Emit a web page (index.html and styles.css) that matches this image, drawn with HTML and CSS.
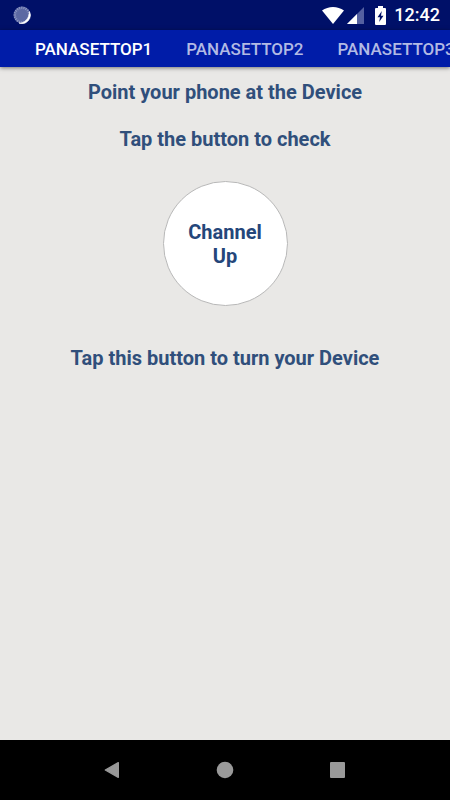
FILE: index.html
```
<!DOCTYPE html>
<html lang="en">
<head>
<meta charset="UTF-8">
<meta name="viewport" content="width=device-width, initial-scale=1">
<title>Remote setup</title>
<link rel="stylesheet" href="styles.css">
</head>
<body>
  <div class="status-bar">
    <svg class="loader" width="18" height="18" viewBox="0 0 18 18">
      <circle cx="9" cy="9" r="8.5" fill="#5c69a3"/>
      <circle cx="9" cy="9" r="7.2" fill="none" stroke="#8f98c4" stroke-width="2.4" stroke-dasharray="1 1.2"/>
      <path d="M16.4 5.5A8.4 8.4 0 0 1 6 17.1C12 17.3 16.3 12.5 16.4 5.5Z" fill="#fff" stroke="#fff" stroke-width="0.6"/>
    </svg>
    <div class="status-icons">
      <svg class="wifi" width="22" height="17" viewBox="0 0 22 17">
        <path d="M0 3.6C6.4 -1.2 15.6 -1.2 22 3.6L11 17Z" fill="#fff"/>
      </svg>
      <svg class="signal" width="17" height="17" viewBox="0 0 17 17">
        <path d="M17 0V17H0Z" fill="#5460a0"/>
        <path d="M10 7V17H0Z" fill="#fff"/>
      </svg>
      <svg class="battery" width="11" height="19" viewBox="0 0 11 19">
        <path d="M3 0H8V2H10Q11 2 11 3V18Q11 19 10 19H1Q0 19 0 18V3Q0 2 1 2H3Z" fill="#fff"/>
        <path d="M6.8 5L2.5 11.2H5L4.2 16L8.5 9.7H6Z" fill="#001068"/>
      </svg>
      <span class="clock">12:42</span>
    </div>
  </div>

  <nav class="tabs">
    <button class="tab active" type="button">PANASETTOP1</button>
    <button class="tab" type="button">PANASETTOP2</button>
    <button class="tab" type="button">PANASETTOP3</button>
  </nav>

  <main class="content">
    <p class="message">Point your phone at the Device</p>
    <p class="message">Tap the button to check</p>
    <button class="round-button" type="button">Channel Up</button>
    <p class="message">Tap this button to turn your Device</p>
  </main>

  <div class="nav-bar">
    <button class="nav-button" type="button" aria-label="Back">
      <svg width="18" height="18" viewBox="0 0 18 18"><path d="M14.3 1.7V16.3L1.3 9Z" fill="#999" stroke="#999" stroke-width="1.4" stroke-linejoin="round"/></svg>
    </button>
    <button class="nav-button" type="button" aria-label="Home">
      <svg width="18" height="18" viewBox="0 0 18 18"><circle cx="9" cy="9" r="8.3" fill="#999"/></svg>
    </button>
    <button class="nav-button" type="button" aria-label="Recent apps">
      <svg width="18" height="18" viewBox="0 0 18 18"><rect x="1" y="1" width="15" height="16" rx="1" fill="#999"/></svg>
    </button>
  </div>
</body>
</html>
```
FILE: styles.css
```
* {
  box-sizing: border-box;
}
body {
  margin: 0;
  min-height: 100vh;
  display: flex;
  flex-direction: column;
  overflow-x: hidden;
  background-color: #e9e8e6;
  font-family: Roboto, "Liberation Sans", sans-serif;
}
button {
  font-family: inherit;
  border: none;
  cursor: pointer;
}
svg {
  display: block;
}
.status-bar {
  height: 30px;
  padding: 0 10px 0 13px;
  display: flex;
  align-items: center;
  justify-content: space-between;
  background-color: #001068;
}
.status-icons {
  display: flex;
  align-items: center;
}
.signal {
  margin-left: 3px;
}
.battery {
  margin-left: 11px;
}
.clock {
  margin-left: 8px;
  color: white;
  font-size: 18px;
  font-weight: 500;
  line-height: 30px;
}
.tabs {
  height: 37px;
  padding-left: 18px;
  display: flex;
  overflow: hidden;
  flex-shrink: 0;
  background-color: #001ca8;
  box-shadow: 0 1px 4px rgba(0, 0, 0, 0.5);
}
.tab {
  flex-shrink: 0;
  padding: 0 17px;
  background: none;
  color: #b2bae4;
  font-size: 17px;
  font-weight: 500;
}
.tab.active {
  color: white;
}
.content {
  flex: 1;
  display: flex;
  flex-direction: column;
  align-items: center;
  padding-top: 13px;
}
.message {
  margin: 0 0 23px;
  color: #304f7b;
  font-size: 20px;
  font-weight: bold;
  line-height: 24px;
  text-align: center;
}
.round-button {
  width: 125px;
  height: 125px;
  margin: 7px 0 40px;
  padding: 0 20px;
  border: 1px solid #b8b8b8;
  border-radius: 50%;
  background-color: white;
  color: #24467a;
  font-size: 20px;
  font-weight: bold;
  line-height: 24px;
}
.nav-bar {
  height: 60px;
  display: flex;
  align-items: center;
  justify-content: center;
  gap: calc(25% - 18px);
  background-color: black;
}
.nav-button {
  padding: 0;
  background: none;
}
```
